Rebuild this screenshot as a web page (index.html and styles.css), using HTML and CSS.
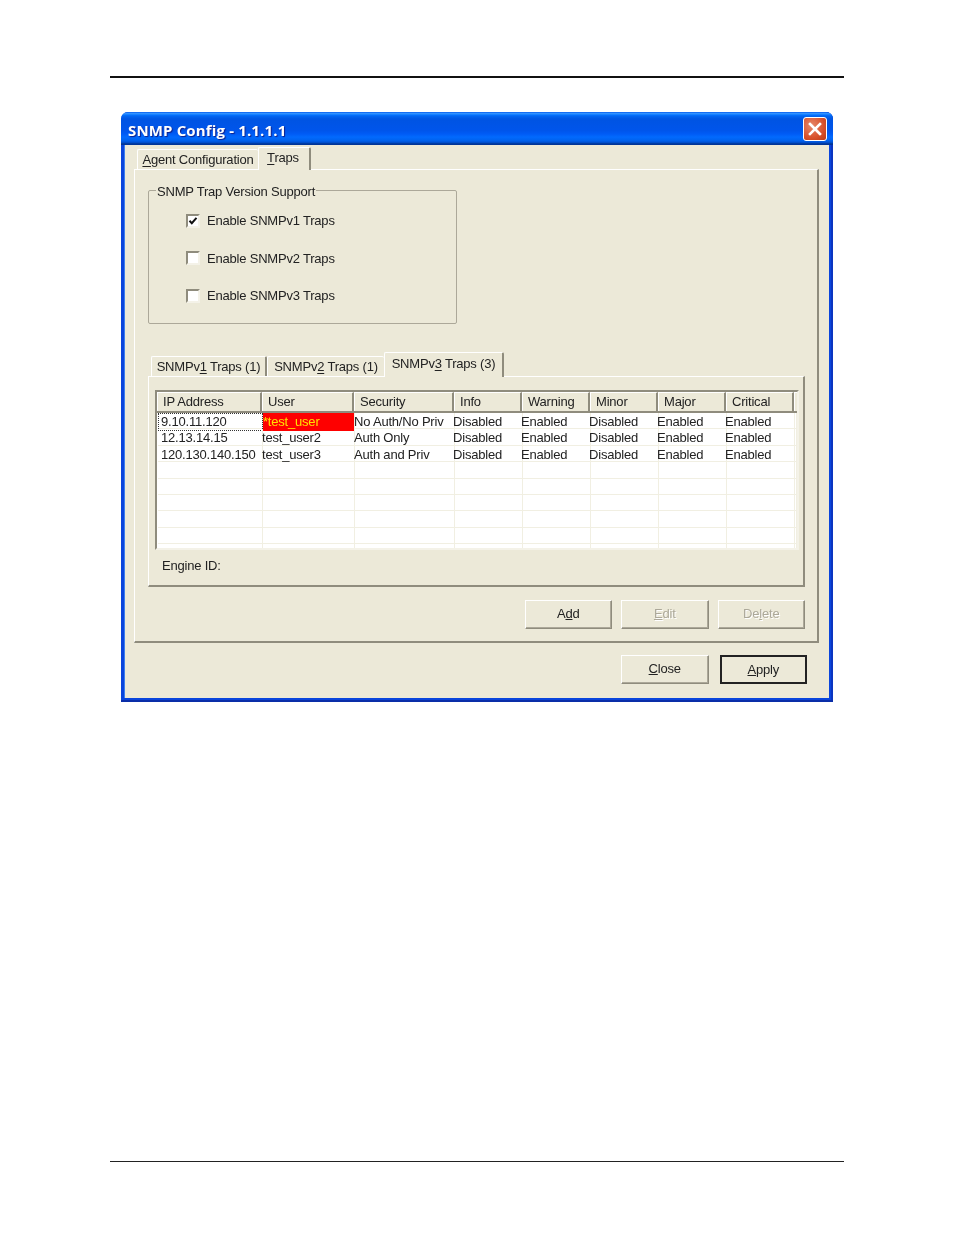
FILE: index.html
```html
<!DOCTYPE html>
<html lang="en">
<head>
<meta charset="utf-8">
<title>SNMP Config</title>
<link rel="stylesheet" href="styles.css">
</head>
<body>
<div class="page">
  <div class="rule"></div>
  <div class="window">
    <div class="titlebar">
      <span class="title">SNMP Config - 1.1.1.1</span>
      <span class="close-btn"><svg width="18" height="18" viewBox="0 0 18 18"><path d="M4 4L14 14M14 4L4 14" stroke="#fff" stroke-width="2.6" stroke-linecap="square" fill="none"/></svg></span>
    </div>
    <div class="client">
      <div class="tabs outer-tabs">
        <div class="tab agent"><u>A</u>gent Configuration</div>
        <div class="tab active traps"><u>T</u>raps</div>
      </div>
      <div class="panel outer-panel">
        <fieldset class="group">
          <legend>SNMP Trap Version Support</legend>
          <div class="check-row"><span class="check"><svg width="10" height="10" viewBox="0 0 10 10"><path d="M1.5 4.8L3.8 7.2L8.5 1.8" stroke="#111" stroke-width="2" fill="none"/></svg></span>Enable SNMPv1 Traps</div>
          <div class="check-row"><span class="check"></span>Enable SNMPv2 Traps</div>
          <div class="check-row"><span class="check"></span>Enable SNMPv3 Traps</div>
        </fieldset>
        <div class="tabs inner-tabs">
          <div class="tab v1">SNMPv<u>1</u> Traps (1)</div>
          <div class="tab v2">SNMPv<u>2</u> Traps (1)</div>
          <div class="tab active v3">SNMPv<u>3</u> Traps (3)</div>
        </div>
        <div class="panel inner-panel">
          <div class="grid">
            <div class="head">
              <span>IP Address</span><span>User</span><span>Security</span><span>Info</span><span>Warning</span><span>Minor</span><span>Major</span><span>Critical</span><span></span>
            </div>
            <div class="rows">
              <div class="row"><span class="ip focus">9.10.11.120</span><span class="flag">*test_user</span><span>No Auth/No Priv</span><span>Disabled</span><span>Enabled</span><span>Disabled</span><span>Enabled</span><span>Enabled</span><span></span></div>
              <div class="row"><span class="ip">12.13.14.15</span><span>test_user2</span><span>Auth Only</span><span>Disabled</span><span>Enabled</span><span>Disabled</span><span>Enabled</span><span>Enabled</span><span></span></div>
              <div class="row"><span class="ip">120.130.140.150</span><span>test_user3</span><span>Auth and Priv</span><span>Disabled</span><span>Enabled</span><span>Disabled</span><span>Enabled</span><span>Enabled</span><span></span></div>
              <div class="row"><span></span><span></span><span></span><span></span><span></span><span></span><span></span><span></span><span></span></div>
              <div class="row"><span></span><span></span><span></span><span></span><span></span><span></span><span></span><span></span><span></span></div>
              <div class="row"><span></span><span></span><span></span><span></span><span></span><span></span><span></span><span></span><span></span></div>
              <div class="row"><span></span><span></span><span></span><span></span><span></span><span></span><span></span><span></span><span></span></div>
              <div class="row"><span></span><span></span><span></span><span></span><span></span><span></span><span></span><span></span><span></span></div>
              <div class="row"><span></span><span></span><span></span><span></span><span></span><span></span><span></span><span></span><span></span></div>
            </div>
          </div>
          <div class="engine">Engine ID:</div>
        </div>
        <div class="buttons list-buttons">
          <div class="btn">A<u>d</u>d</div>
          <div class="btn disabled"><u>E</u>dit</div>
          <div class="btn disabled">De<u>l</u>ete</div>
        </div>
      </div>
      <div class="buttons main-buttons">
        <div class="btn"><u>C</u>lose</div>
        <div class="btn default"><u>A</u>pply</div>
      </div>
    </div>
  </div>
  <div class="rule footer-rule"></div>
</div>
</body>
</html>
```

FILE: styles.css
```css
* { box-sizing: border-box; }
html, body { margin: 0; padding: 0; background: #fff; }
.page { width: 954px; height: 1235px; padding: 76px 110px 0; overflow: hidden; font-family: "Liberation Sans", Arial, sans-serif; font-size: 13px; letter-spacing: -0.2px; color: #222; }
.rule { height: 2px; background: #111; }
.footer-rule { height: 1px; margin-top: 459px; background: #222; }
.window { width: 712px; height: 590px; margin: 34px 0 0 11px; border-radius: 7px 7px 0 0; overflow: hidden; background: #0a45dc; box-shadow: inset 0 -2px 0 #0a2ea8, inset -2px 0 0 #0a35c0; padding: 0 4px 4px 4px; display: flex; flex-direction: column; filter: blur(0.4px); }
.titlebar { height: 33px; margin: 0 -4px; padding: 0 6px 0 7px; display: flex; align-items: center; justify-content: space-between; flex: none;
  background: linear-gradient(180deg, #0058ee 0%, #3593ff 4%, #288eff 6%, #127dff 8%, #036ffc 10%, #0262ee 14%, #0057e5 20%, #0054e3 24%, #0055eb 56%, #005bf5 66%, #026afe 76%, #0062ef 86%, #0052d6 92%, #0040ab 94%, #003092 100%); }
.title { color: #fff; font-weight: 700; font-size: 15px; letter-spacing: 0.15px; padding-top: 3px; text-shadow: 1px 1px 1px #0f1f8a; font-family: "Open Sans", "Liberation Sans", sans-serif; }
.close-btn { width: 24px; height: 24px; margin-top: 1px; border: 1px solid #fff; border-radius: 3px; display: flex; align-items: center; justify-content: center; background: radial-gradient(circle at 35% 35%, #e58a6c, #d9512c 60%, #b93a16 100%); }
.client { flex: 1; background: #ece9d8; padding: 2px 11px 0 9px; border-left: 1px solid #3c7ff0; margin-left: -1px; display: flex; flex-direction: column; }
.tabs { display: flex; align-items: flex-end; position: relative; z-index: 1; }
.tab { background: #ece9d8; white-space: nowrap; text-align: center; border-top: 1px solid #fff; border-left: 1px solid #fff; border-right: 2px solid #8f8c7d; border-radius: 2px 2px 0 0; }
.tab u { text-underline-offset: 2px; }
.outer-tabs { height: 22px; padding-left: 3px; flex: none; }
.agent { width: 121px; height: 20px; line-height: 19px; border-right: 0; }
.traps { width: 53px; height: 23px; line-height: 19px; margin-bottom: -1px; padding-right: 2px; }
.panel { background: #ece9d8; border-top: 1px solid #fff; border-left: 1px solid #fff; border-right: 2px solid #8f8c7d; border-bottom: 2px solid #8f8c7d; }
.outer-panel { width: 685px; height: 474px; padding: 18px 12px 0 13px; display: flex; flex-direction: column; flex: none; }
.group { width: 309px; height: 136px; margin: 0; padding: 0 0 0 37px; border: 1px solid #aca899; border-radius: 2px; min-width: 0; flex: none; }
.group legend { padding: 0 1px; margin-left: -30px; height: 4px; line-height: 8px; }
.check-row { height: 37.5px; display: flex; align-items: center; gap: 7px; }
.check-row:first-of-type { margin-top: 10px; }
.check { width: 14px; height: 14px; background: #fff; border: 2px solid; border-color: #8f8c7d #f4f2e8 #f4f2e8 #8f8c7d; display: flex; align-items: center; justify-content: center; }
.inner-tabs { height: 25px; margin-top: 27px; padding-left: 3px; flex: none; }
.v1 { width: 116px; height: 20px; line-height: 19px; }
.v2 { width: 117px; height: 20px; line-height: 19px; border-right: 0; }
.v3 { width: 120px; height: 25px; line-height: 22px; margin-bottom: -1px; }
.inner-panel { width: 657px; height: 211px; padding: 13px 5px 0 6px; flex: none; }
.grid { width: 644px; height: 160px; border: 2px solid; border-color: #8f8c7d #f4f2e8 #f4f2e8 #8f8c7d; background: #fff; overflow: hidden; }
.head, .row { display: grid; grid-template-columns: 105px 92px 100px 68px 68px 68px 68px 68px 1fr; }
.head { height: 21px; background: #ece9d8; }
.head span { padding-left: 6px; line-height: 18px; border-top: 1px solid #fff; border-right: 2px solid #8f8c7d; border-bottom: 2px solid #8f8c7d; box-shadow: inset 1px 0 0 #fff; }
.head span:last-child { border-right: 0; }
.rows { padding-left: 1px; }
.row { height: 16.4px; line-height: 18px; white-space: nowrap; background: #fff; border-bottom: 1px solid #f1efe2; }
.row span { border-right: 1px solid #f1efe2; text-indent: -1px; }
.row span:nth-child(n+4) { text-indent: -2px; }
.row .ip { padding-left: 4px; }
.row .focus { outline: 1px dotted #333; outline-offset: -1px; }
.row .flag { background: #fe0000; color: #ffe000; text-indent: 0; }
.engine { margin-top: 8px; padding-left: 7px; line-height: 16px; }
.buttons { display: flex; justify-content: flex-end; flex: none; }
.list-buttons { gap: 9px; margin-top: 13px; width: 657px; }
.main-buttons { gap: 11px; margin-top: 12px; width: 673px; }
.btn { width: 87.5px; height: 29px; line-height: 26px; text-align: center; background: #ece9d8; border: 1px solid; border-color: #fff #8f8c7d #8f8c7d #fff; box-shadow: inset -1px -1px 0 #aca899; }
.btn.disabled { color: #aca899; text-shadow: 1px 1px 0 #fff; }
.btn.default { border: 2px solid #222; box-shadow: none; line-height: 25px; }
```
